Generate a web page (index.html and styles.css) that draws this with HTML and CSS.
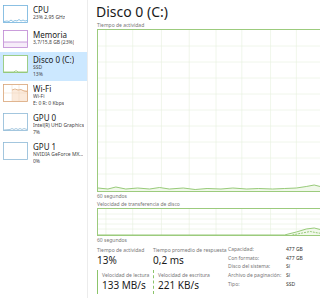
FILE: index.html
```html
<!DOCTYPE html>
<html lang="es">
<head>
  <meta charset="UTF-8" />
  <title>Administrador de tareas - Rendimiento</title>
  <link rel="stylesheet" href="styles.css">
</head>
<body>
  <div class="app">
    <aside class="sidebar">
      <div class="item">
        <svg class="thumb cpu" viewBox="0 0 25 18">
          <rect x="0.5" y="0.5" width="24" height="17" />
          <polyline points="1,16.5 4,16 6,16.5 8,15 10,16.5 12,15.5 14,16 16,14.5 18,16 20,15 22,16 24,15.5" />
        </svg>
        <div class="info">
          <div class="name">CPU</div>
          <div class="sub">23% 2,95 GHz</div>
        </div>
      </div>
      <div class="item">
        <svg class="thumb mem" viewBox="0 0 25 18">
          <rect x="0.5" y="0.5" width="24" height="17" />
          <rect class="fill" x="1" y="12" width="23" height="5" />
          <line x1="1" y1="12" x2="24" y2="12" />
        </svg>
        <div class="info">
          <div class="name">Memoria</div>
          <div class="sub">3,7/15,8 GB (23%)</div>
        </div>
      </div>
      <div class="item active">
        <svg class="thumb disk" viewBox="0 0 25 18">
          <rect x="0.5" y="0.5" width="24" height="17" />
          <polyline points="1,17 11,17 12,16 14,16 15,17 24,17" />
        </svg>
        <div class="info">
          <div class="name">Disco 0 (C:)</div>
          <div class="sub">SSD</div>
          <div class="sub">13%</div>
        </div>
      </div>
      <div class="item">
        <svg class="thumb wifi" viewBox="0 0 25 18">
          <rect x="0.5" y="0.5" width="24" height="17" />
          <rect class="fill" x="9" y="6" width="15" height="11" />
          <line class="grid" x1="9" y1="1" x2="9" y2="17" />
          <line class="grid" x1="16" y1="1" x2="16" y2="17" />
          <line class="grid" x1="1" y1="9" x2="24" y2="9" />
          <polyline points="9,6 12,5 15,6 18,5.5 21,7 24,7.5" />
        </svg>
        <div class="info">
          <div class="name">Wi-Fi</div>
          <div class="sub">Wi-Fi</div>
          <div class="sub">E: 0 R: 0 Kbps</div>
        </div>
      </div>
      <div class="item">
        <svg class="thumb gpu" viewBox="0 0 25 18">
          <rect x="0.5" y="0.5" width="24" height="17" />
          <polyline points="1,17 7,16.5 9,15.5 11,16.5 13,15.5 15,16.5 17,15.5 19,16.5 21,15.5 24,16.5" />
        </svg>
        <div class="info">
          <div class="name">GPU 0</div>
          <div class="sub">Intel(R) UHD Graphics</div>
          <div class="sub">7%</div>
        </div>
      </div>
      <div class="item">
        <svg class="thumb gpu" viewBox="0 0 25 18">
          <rect x="0.5" y="0.5" width="24" height="17" />
        </svg>
        <div class="info">
          <div class="name">GPU 1</div>
          <div class="sub">NVIDIA GeForce MX...</div>
          <div class="sub">0%</div>
        </div>
      </div>
    </aside>

    <main class="detail">
      <h1 class="title">Disco 0 (C:)</h1>
      <div class="caption">Tiempo de actividad</div>
      <div class="chart big">
        <svg viewBox="0 0 240 161" preserveAspectRatio="none">
          <g class="grid">
            <line x1="0" y1="16" x2="240" y2="16" />
            <line x1="0" y1="32" x2="240" y2="32" />
            <line x1="0" y1="48" x2="240" y2="48" />
            <line x1="0" y1="64" x2="240" y2="64" />
            <line x1="0" y1="80" x2="240" y2="80" />
            <line x1="0" y1="96" x2="240" y2="96" />
            <line x1="0" y1="112" x2="240" y2="112" />
            <line x1="0" y1="128" x2="240" y2="128" />
            <line x1="0" y1="144" x2="240" y2="144" />
            <line x1="8" y1="0" x2="8" y2="161" />
            <line x1="35" y1="0" x2="35" y2="161" />
            <line x1="64" y1="0" x2="64" y2="161" />
            <line x1="92" y1="0" x2="92" y2="161" />
            <line x1="119" y1="0" x2="119" y2="161" />
            <line x1="145" y1="0" x2="145" y2="161" />
            <line x1="174" y1="0" x2="174" y2="161" />
            <line x1="200" y1="0" x2="200" y2="161" />
            <line x1="228" y1="0" x2="228" y2="161" />
          </g>
          <polygon class="area" points="0,161 0,158 10,159 18,157 28,159 40,158 52,159 62,157.5 72,159 86,158 98,159.5 110,158.5 124,159 136,158 150,159 162,158.5 176,159 188,158.5 200,158 210,156.5 218,155 226,157 240,158 240,161" />
          <polyline class="line" points="0,158 10,159 18,157 28,159 40,158 52,159 62,157.5 72,159 86,158 98,159.5 110,158.5 124,159 136,158 150,159 162,158.5 176,159 188,158.5 200,158 210,156.5 218,155 226,157 240,158" />
        </svg>
      </div>
      <div class="caption">60 segundos</div>
      <div class="caption">Velocidad de transferencia de disco</div>
      <div class="chart small">
        <svg viewBox="0 0 240 26" preserveAspectRatio="none">
          <g class="grid">
            <line x1="0" y1="5" x2="240" y2="5" />
            <line x1="0" y1="10" x2="240" y2="10" />
            <line x1="0" y1="15" x2="240" y2="15" />
            <line x1="0" y1="20" x2="240" y2="20" />
            <line x1="8" y1="0" x2="8" y2="26" />
            <line x1="35" y1="0" x2="35" y2="26" />
            <line x1="64" y1="0" x2="64" y2="26" />
            <line x1="92" y1="0" x2="92" y2="26" />
            <line x1="119" y1="0" x2="119" y2="26" />
            <line x1="145" y1="0" x2="145" y2="26" />
            <line x1="174" y1="0" x2="174" y2="26" />
            <line x1="200" y1="0" x2="200" y2="26" />
            <line x1="228" y1="0" x2="228" y2="26" />
          </g>
          <polygon class="area" points="190,26 200,23 210,20 218,19 226,21 240,22 240,26" />
          <polyline class="line" points="0,26 188,26 200,23 210,20 218,19 226,21 240,22" />
          <polyline class="line dashed" points="196,26 206,24 214,22.5 222,24 232,25 240,25" />
        </svg>
      </div>
      <div class="caption">60 segundos</div>

      <div class="stats">
        <div class="stat">
          <div class="label">Tiempo de actividad</div>
          <div class="value">13%</div>
        </div>
        <div class="stat">
          <div class="label">Tiempo promedio de respuesta</div>
          <div class="value">0,2 ms</div>
        </div>
        <table class="props">
          <tr><td>Capacidad:</td><td>477 GB</td></tr>
          <tr><td>Con formato:</td><td>477 GB</td></tr>
          <tr><td>Disco del sistema:</td><td>Sí</td></tr>
          <tr><td>Archivo de paginación:</td><td>Sí</td></tr>
          <tr><td>Tipo:</td><td>SSD</td></tr>
        </table>
        <div class="stat speed read">
          <div class="label">Velocidad de lectura</div>
          <div class="value">133 MB/s</div>
        </div>
        <div class="stat speed write">
          <div class="label">Velocidad de escritura</div>
          <div class="value">221 KB/s</div>
        </div>
      </div>
    </main>
  </div>
</body>
</html>
```

FILE: styles.css
```css
body {
  margin: 0;
  font-family: 'Noto Sans', 'Open Sans', sans-serif;
  background-color: #fff;
  color: #1a1a1a;
  overflow: hidden;
}
.app {
  display: flex;
  height: 298px;
}
.sidebar {
  width: 87px;
  flex-shrink: 0;
  border-right: 1px solid #ececec;
  padding-top: 2px;
}
.item {
  display: flex;
  gap: 5px;
  padding: 3px 0 4px 3px;
}
.item.active {
  background-color: #cce8ff;
}
.thumb {
  width: 25px;
  height: 18px;
  flex-shrink: 0;
  fill: none;
  stroke-width: 0.8;
}
.thumb rect {
  fill: #fff;
}
.thumb.cpu { stroke: #6fb1dc; }
.thumb.mem { stroke: #bd86d3; }
.thumb.mem .fill { fill: #f6ecf9; stroke: none; }
.thumb.disk { stroke: #8cc46a; }
.thumb.wifi { stroke: #d9a476; }
.thumb.wifi .fill { fill: #fbeadb; stroke: none; }
.thumb.wifi .grid { stroke: #efd6bf; stroke-width: 0.5; }
.thumb.gpu { stroke: #8db9d6; }
.info {
  white-space: nowrap;
  overflow: hidden;
}
.name {
  font-size: 8px;
  line-height: 9px;
}
.sub {
  font-size: 5px;
  line-height: 6.5px;
  color: #444;
}
.detail {
  flex: 1;
  min-width: 0;
  overflow: hidden;
  padding: 2px 0 0 9px;
}
.title {
  margin: 0 0 0 -1px;
  font-size: 14px;
  font-weight: normal;
  line-height: 19px;
}
.caption {
  font-size: 5px;
  line-height: 8px;
  color: #777;
  white-space: nowrap;
}
.chart {
  width: 240px;
  border: 1px solid #9ccb7d;
  box-sizing: border-box;
}
.chart.big {
  height: 163px;
}
.chart.small {
  height: 28px;
}
.chart svg {
  display: block;
  width: 100%;
  height: 100%;
}
.chart .grid line {
  stroke: #e6f0de;
  stroke-width: 0.6;
}
.chart .area {
  fill: #f1f8eb;
}
.chart .line {
  fill: none;
  stroke: #8cc46a;
  stroke-width: 0.9;
}
.chart .line.dashed {
  stroke-dasharray: 2 1;
}
.stats {
  display: grid;
  grid-template-columns: 56px 75px 1fr;
  grid-template-rows: auto auto;
  margin-top: 2px;
}
.stat {
  white-space: nowrap;
}
.label {
  font-size: 5px;
  line-height: 8px;
  color: #777;
}
.value {
  font-size: 10px;
  line-height: 13px;
}
.speed {
  margin-top: 3px;
  padding: 1px 0 2px 4px;
  border-left: 1px solid #8cc46a;
}
.speed.write {
  border-left: 1px dashed #8cc46a;
}
.props {
  grid-row: 1 / 3;
  grid-column: 3;
  border-collapse: collapse;
  align-self: start;
  margin-top: -1px;
}
.props td {
  padding: 0;
  font-size: 5px;
  line-height: 8.7px;
  color: #777;
  white-space: nowrap;
}
.props td:first-child {
  width: 58px;
}
.props td + td {
  color: #333;
}
```
